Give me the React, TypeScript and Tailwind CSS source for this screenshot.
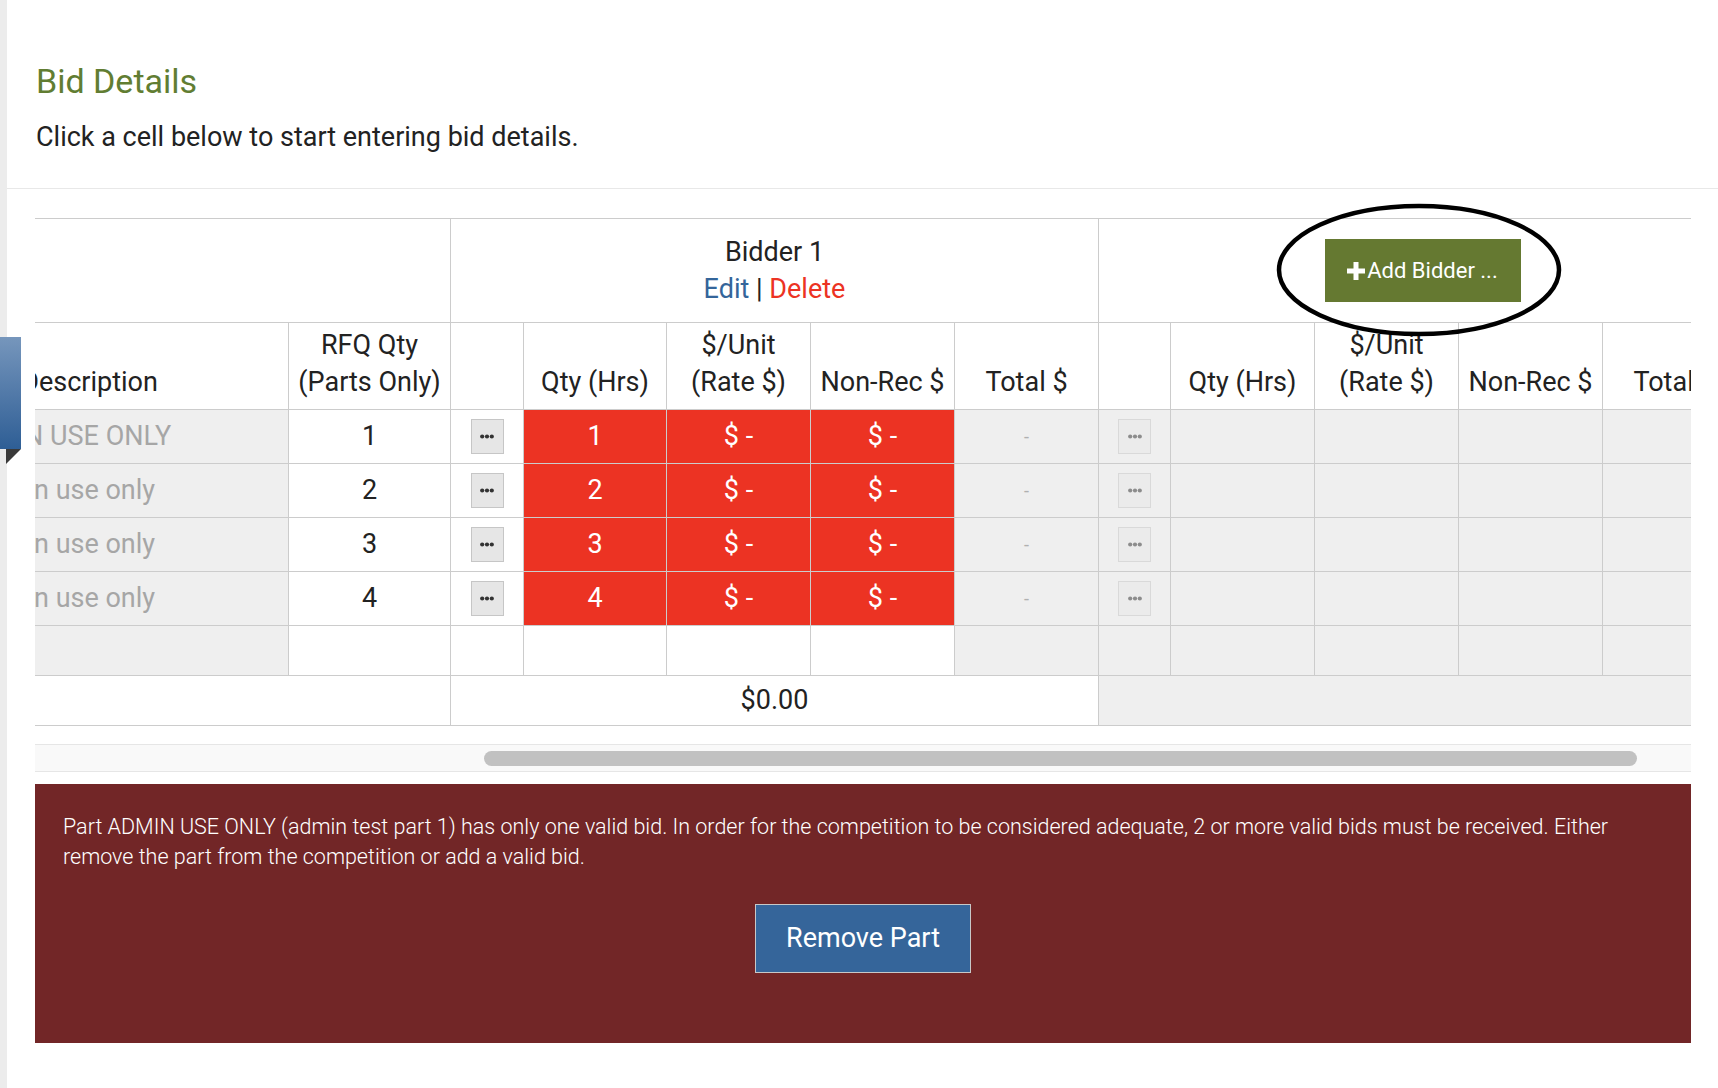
import React from "react";

function Dots({ muted }: { muted?: boolean }) {
  const fill = muted ? "#8c8c8c" : "#333333";
  return (
    <div
      className={
        muted
          ? "flex h-[35px] w-[33px] items-center justify-center border border-[#d9d9d9] bg-[#ebebeb]"
          : "flex h-[35px] w-[33px] items-center justify-center border border-[#c6c6c6] bg-[#e6e6e6]"
      }
    >
      <svg width="14" height="5" viewBox="0 0 14 5">
        <circle cx="2.2" cy="2.5" r="2.1" fill={fill} />
        <circle cx="7" cy="2.5" r="2.1" fill={fill} />
        <circle cx="11.8" cy="2.5" r="2.1" fill={fill} />
      </svg>
    </div>
  );
}

const rows = [
  { d: "ADMIN USE ONLY", q: 1 },
  { d: "admin use only", q: 2 },
  { d: "admin use only", q: 3 },
  { d: "admin use only", q: 4 },
];

const C = "border-r border-b border-[#cccccc]";
const H2 = "border-r border-b border-[#cccccc] flex flex-col items-center justify-end pb-[8px] text-center whitespace-nowrap";
const D = "border-r border-b border-[#cccccc] flex items-center justify-center";

export default function App() {
  return (
    <div className="relative flex min-h-screen bg-white font-[Roboto,sans-serif] text-[#222222]">
      <div className="w-[7px] shrink-0 bg-[#ececec]" />
      <div className="min-w-0 flex-1">
        <div className="pl-[29px] pt-[61px] pb-[33px]">
          <h1 className="text-[34px] leading-[40px] text-[#617d32]">Bid Details</h1>
          <p className="mt-[18px] text-[27px] leading-[36px] text-[#222222]">
            Click a cell below to start entering bid details.
          </p>
        </div>
        <div className="h-px bg-[#e8e8e8]" />
        <div className="pl-[28px] pr-[27px] pt-[29px]">
          <div className="overflow-hidden">
            <div className="-ml-[182px] grid w-[2038px] grid-cols-[436px_162px_73px_143px_144px_144px_144px_72px_144px_144px_144px_144px] border-t border-[#cccccc] text-[27px] leading-[37px]">
              {/* header row 1 */}
              <div className={`${C} col-span-2 h-[104px] bg-white`} />
              <div className={`${C} col-span-5 flex flex-col items-center justify-center bg-white`}>
                <div>Bidder 1</div>
                <div>
                  <span className="text-[#34659a]">Edit</span>
                  <span className="text-[#222222]"> | </span>
                  <span className="text-[#ec3323]">Delete</span>
                </div>
              </div>
              <div className={`${C} col-span-5 flex items-center justify-center bg-white`}>
                <button className="flex h-[63px] w-[196px] items-center justify-center gap-[2px] bg-[#657931] text-[22px] leading-none text-white">
                  <svg width="18" height="18" viewBox="0 0 18 18">
                    <rect x="6.5" y="0" width="5" height="18" fill="white" />
                    <rect x="0" y="6.5" width="18" height="5" fill="white" />
                  </svg>
                  <span>Add Bidder ...</span>
                </button>
              </div>

              {/* header row 2 */}
              <div className={`${H2} h-[87px] pl-[38px]`}>Description</div>
              <div className={H2}>
                <span>RFQ Qty</span>
                <span>(Parts Only)</span>
              </div>
              <div className={C} />
              <div className={H2}>Qty (Hrs)</div>
              <div className={H2}>
                <span>$/Unit</span>
                <span>(Rate $)</span>
              </div>
              <div className={H2}>Non-Rec $</div>
              <div className={H2}>Total $</div>
              <div className={C} />
              <div className={H2}>Qty (Hrs)</div>
              <div className={H2}>
                <span>$/Unit</span>
                <span>(Rate $)</span>
              </div>
              <div className={H2}>Non-Rec $</div>
              <div className={H2}>Total $</div>

              {/* data rows */}
              {rows.map((r) => (
                <React.Fragment key={r.q}>
                  <div className={`${D} h-[54px] whitespace-nowrap bg-[#efefef] pr-[12px] text-[#a6a6a6]`}>{r.d}</div>
                  <div className={`${D} bg-white`}>{r.q}</div>
                  <div className={`${D} bg-white`}>
                    <Dots />
                  </div>
                  <div className={`${D} bg-[#ec3323] text-white`}>{r.q}</div>
                  <div className={`${D} bg-[#ec3323] text-white`}>$ -</div>
                  <div className={`${D} bg-[#ec3323] text-white`}>$ -</div>
                  <div className={`${D} bg-[#efefef] text-[18px] text-[#b0b0b0]`}>-</div>
                  <div className={`${D} bg-[#efefef]`}>
                    <Dots muted />
                  </div>
                  <div className={`${C} bg-[#efefef]`} />
                  <div className={`${C} bg-[#efefef]`} />
                  <div className={`${C} bg-[#efefef]`} />
                  <div className={`${C} bg-[#efefef]`} />
                </React.Fragment>
              ))}

              {/* empty row */}
              <div className={`${C} h-[50px] bg-[#efefef]`} />
              <div className={`${C} bg-white`} />
              <div className={`${C} bg-white`} />
              <div className={`${C} bg-white`} />
              <div className={`${C} bg-white`} />
              <div className={`${C} bg-white`} />
              <div className={`${C} bg-[#efefef]`} />
              <div className={`${C} bg-[#efefef]`} />
              <div className={`${C} bg-[#efefef]`} />
              <div className={`${C} bg-[#efefef]`} />
              <div className={`${C} bg-[#efefef]`} />
              <div className={`${C} bg-[#efefef]`} />

              {/* total row */}
              <div className={`${C} col-span-2 h-[50px] bg-white`} />
              <div className={`${D} col-span-5 bg-white`}>$0.00</div>
              <div className={`${C} col-span-5 bg-[#efefef]`} />
            </div>
          </div>
          <div className="mt-[18px] flex h-[28px] items-center border-y border-[#e6e6e6] bg-[#f9f9f9] pl-[449px]">
            <div className="h-[15px] w-[1153px] rounded-full bg-[#c1c1c1]" />
          </div>
          <div className="mt-[12px] bg-[#722627] px-[28px] pt-[28px] pb-[70px] text-white">
            <p className="text-[21.5px] font-light leading-[30px]">
              Part ADMIN USE ONLY (admin test part 1) has only one valid bid. In order for the competition to be
              considered adequate, 2 or more valid bids must be received. Either remove the part from the competition
              or add a valid bid.
            </p>
            <div className="mt-[32px] flex justify-center">
              <button className="h-[69px] w-[216px] border border-[#c8c8c8] bg-[#35659a] text-[27px] text-white">
                Remove Part
              </button>
            </div>
          </div>
        </div>
      </div>

      <div className="absolute left-0 top-[337px] h-[112px] w-[21px] bg-gradient-to-b from-[#7696bc] to-[#2e5e95]" />
      <svg className="absolute left-[6px] top-[449px]" width="15" height="15" viewBox="0 0 15 15">
        <polygon points="0,0 15,0 0,15" fill="#3a3a3a" />
      </svg>

      <svg
        className="pointer-events-none absolute left-[1274px] top-[201px]"
        width="290"
        height="138"
        viewBox="0 0 290 138"
      >
        <ellipse cx="145" cy="69" rx="140" ry="64" fill="none" stroke="#000" strokeWidth="4.5" />
      </svg>
    </div>
  );
}
